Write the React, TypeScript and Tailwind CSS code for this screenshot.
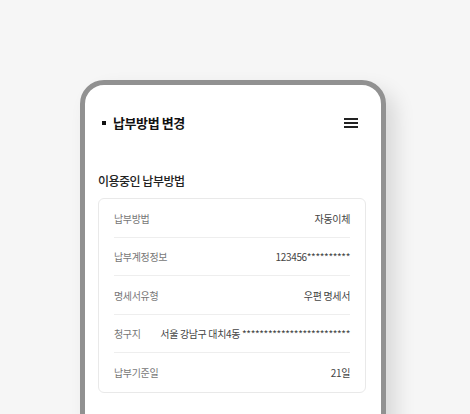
import React from "react";

const rows = [
  { label: "납부방법", value: "자동이체" },
  { label: "납부계정정보", value: "123456**********" },
  { label: "명세서유형", value: "우편 명세서" },
  { label: "청구지", value: "서울 강남구 대치4동 *************************" },
  { label: "납부기준일", value: "21일" },
];

function App() {
  return (
    <div
      className="w-[470px] h-[414px] overflow-hidden bg-[#f6f6f6] pt-[80px] pl-[80px]"
      style={{ fontFamily: '"Noto Sans CJK KR", "Noto Sans", sans-serif' }}
    >
      <div className="w-[306px] h-[400px] rounded-t-[24px] border-[5px] border-[#919191] bg-white shadow-[10px_10px_20px_rgba(0,0,0,0.12)]">
        {/* header */}
        <div className="flex items-center justify-between pt-[28px] pl-[17px] pr-[23px] h-[48px]">
          <div className="flex items-center gap-[7px]">
            <span className="w-[4px] h-[4px] bg-[#111]" />
            <span className="text-[13px] font-bold text-[#111] leading-[20px] tracking-[-0.4px]">
              납부방법 변경
            </span>
          </div>
          <div className="flex flex-col gap-[2px] w-[14px]">
            <span className="h-[2px] bg-[#222]" />
            <span className="h-[2px] bg-[#222]" />
            <span className="h-[2px] bg-[#222]" />
          </div>
        </div>

        <div className="px-[13px] pr-[15px] pt-[39px]">
          <div className="text-[12px] font-medium text-[#222] leading-[18px] tracking-[-0.5px]">
            이용중인 납부방법
          </div>
          <div className="mt-[8px] rounded-[6px] border border-[#e9e9e9] px-[15px]">
            {rows.map((r, i) => (
              <div
                key={r.label}
                className={
                  "flex items-center justify-between gap-[16px] h-[38.5px] pt-[1px] text-[10px] tracking-[-0.35px] whitespace-nowrap " +
                  (i < rows.length - 1 ? "border-b border-[#eeeeee]" : "")
                }
              >
                <span className="text-[#777]">{r.label}</span>
                <span className="text-[#444]">{r.value}</span>
              </div>
            ))}
          </div>
        </div>
      </div>
    </div>
  );
}

export default App;
